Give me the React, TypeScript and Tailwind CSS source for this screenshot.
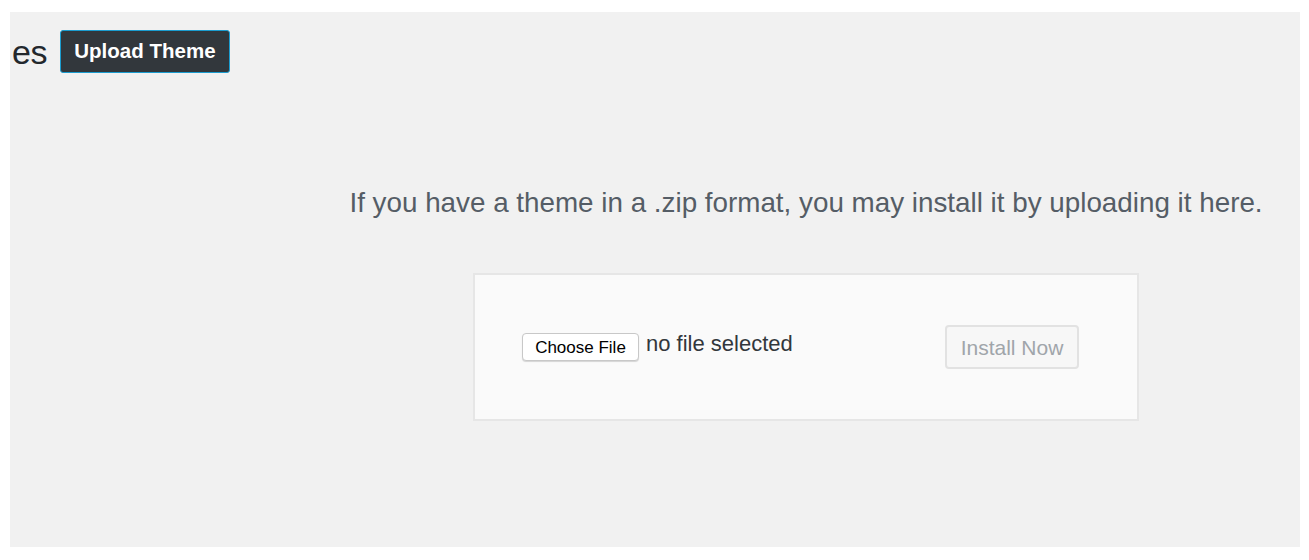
import React from "react";

export default function App() {
  return (
    <div
      className="w-[1309px] h-[560px] bg-white pt-[12px] pl-[10px] pr-[9px] overflow-hidden"
      style={{ fontFamily: '"Liberation Sans", Arial, sans-serif' }}
    >
      <div className="h-[535px] bg-[#f1f1f1] flex flex-col">
        <div className="flex items-center mt-[18px] h-[43px]">
          <span className="ml-[2px] text-[34px] leading-none text-[#23282d] tracking-[-0.5px]">es</span>
          <button className="ml-[13px] h-[43px] w-[170px] rounded-[3px] border border-[#1b9ccf] bg-[#32373c] text-white font-bold text-[20.5px] leading-none">
            Upload Theme
          </button>
        </div>
        <div className="ml-[302px] flex flex-col items-center">
          <p className="mt-[114px] text-[27.8px] leading-[32px] text-[#555d66] text-center whitespace-nowrap">
            If you have a theme in a .zip format, you may install it by uploading it here.
          </p>
          <div className="mt-[54px] w-[666px] h-[148px] border-2 border-[#e6e6e6] bg-[#fafafa] flex items-center justify-between pl-[47px] pr-[58px]">
            <div className="flex items-center">
              <button className="w-[117px] h-[28px] rounded-[4px] border border-[#c8c8c8] bg-white shadow-[0_1px_1px_rgba(0,0,0,0.15)] text-[17px] leading-none text-black">
                Choose File
              </button>
              <span className="ml-[7px] -mt-[6px] text-[22px] leading-none text-[#32373c]">no file selected</span>
            </div>
            <button className="w-[134px] h-[44px] rounded-[4px] border-2 border-[#e2e2e2] bg-[#f7f7f7] text-[21px] leading-none text-[#a0a5aa]">
              Install Now
            </button>
          </div>
        </div>
      </div>
    </div>
  );
}
